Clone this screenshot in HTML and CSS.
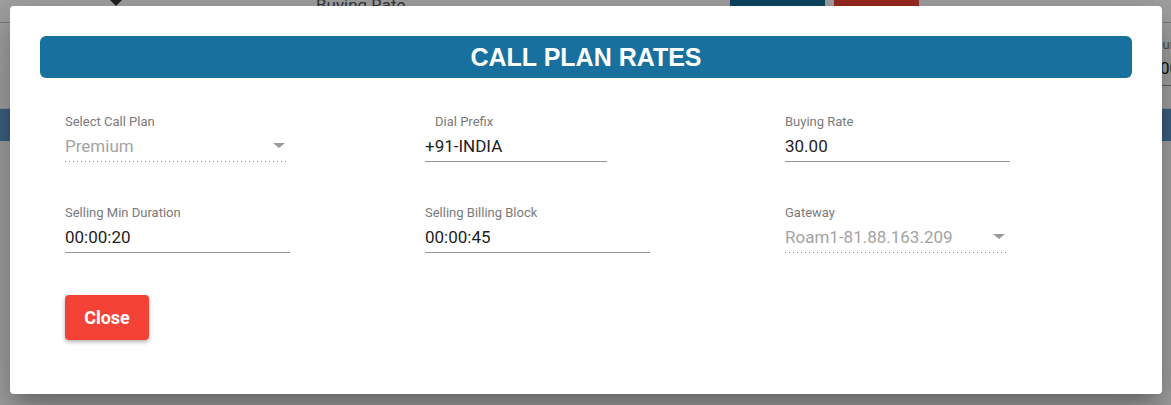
FILE: index.html
```html
<!DOCTYPE html>
<html lang="en">
<head>
<meta charset="utf-8">
<title>Call Plan Rates</title>
<link rel="stylesheet" href="styles.css">
</head>
<body>
<div class="page">
  <div class="toolbar">
    <span class="caret"></span>
    <span class="tb-label">Buying Rate</span>
    <span class="tb-btn search">Search</span>
    <span class="tb-btn reset">Reset</span>
  </div>
  <div class="side-field">
    <div class="side-label">Duration</div>
    <div class="side-value">00:00:20</div>
  </div>
  <div class="table-head"></div>
</div>
<div class="backdrop"></div>
<div class="dialog">
  <h1 class="dialog-title">CALL PLAN RATES</h1>
  <div class="form">
    <div class="field w222 disabled">
      <div class="label">Select Call Plan</div>
      <div class="value select"><span>Premium</span><span class="arrow"></span></div>
    </div>
    <div class="field w182">
      <div class="label indent">Dial Prefix</div>
      <div class="value">+91-INDIA</div>
    </div>
    <div class="field w225">
      <div class="label">Buying Rate</div>
      <div class="value">30.00</div>
    </div>
    <div class="field w225">
      <div class="label">Selling Min Duration</div>
      <div class="value">00:00:20</div>
    </div>
    <div class="field w225">
      <div class="label">Selling Billing Block</div>
      <div class="value">00:00:45</div>
    </div>
    <div class="field w222 disabled">
      <div class="label">Gateway</div>
      <div class="value select"><span>Roam1-81.88.163.209</span><span class="arrow"></span></div>
    </div>
  </div>
  <div class="actions">
    <button class="btn-close" type="button">Close</button>
  </div>
</div>
</body>
</html>
```
FILE: styles.css
```css
html, body {
  margin: 0;
  padding: 0;
}
body {
  width: 1171px;
  height: 405px;
  overflow: hidden;
  position: relative;
  background: #fff;
  font-family: Roboto, "Liberation Sans", sans-serif;
}

/* background page */
.page {
  width: 1171px;
}
.toolbar {
  height: 22px;
  border-bottom: 1px solid #c4c4c4;
  display: flex;
  align-items: flex-start;
  padding-left: 110px;
}
.caret {
  width: 0;
  height: 0;
  border-left: 6px solid transparent;
  border-right: 6px solid transparent;
  border-top: 6px solid #333;
}
.tb-label {
  margin-left: 194px;
  width: 414px;
  margin-top: -5px;
  font-size: 17px;
  line-height: 20px;
  color: #555;
}
.tb-btn {
  height: 36px;
  margin-top: -30px;
  display: flex;
  align-items: flex-end;
  justify-content: center;
  font-size: 17px;
  font-weight: bold;
  color: #fff;
  line-height: 20px;
  box-sizing: border-box;
  padding-bottom: 2px;
}
.tb-btn.search {
  width: 95px;
  background: #17709e;
}
.tb-btn.reset {
  width: 85px;
  margin-left: 9px;
  background: #f44336;
}
.side-field {
  margin-left: 1154px;
  padding-top: 14px;
  width: 120px;
  border-bottom: 1px solid #949494;
  padding-bottom: 7px;
}
.side-label {
  font-size: 13px;
  line-height: 15px;
  color: #757575;
  white-space: nowrap;
}
.side-value {
  margin-top: 6px;
  margin-left: 6px;
  font-size: 17px;
  line-height: 20px;
  color: #212121;
  white-space: nowrap;
}
.table-head {
  margin-top: 22px;
  height: 32px;
  border-top: 1px solid #e0ecf5;
  background: #5f98ce;
}

.backdrop {
  position: absolute;
  left: 0;
  top: 0;
  right: 0;
  bottom: 0;
  background: rgba(0, 0, 0, 0.37);
}

/* dialog */
.dialog {
  position: absolute;
  left: 10px;
  top: 6px;
  width: 1152px;
  height: 388px;
  box-sizing: border-box;
  padding: 30px;
  background: #fff;
  border-radius: 4px;
  box-shadow: 0 11px 15px -7px rgba(0,0,0,.2), 0 24px 38px 3px rgba(0,0,0,.14), 0 9px 46px 8px rgba(0,0,0,.12);
}
.dialog-title {
  margin: 0;
  height: 42px;
  border-radius: 6px;
  background: #17709e;
  color: #fff;
  font-family: "Liberation Sans", Arial, sans-serif;
  font-weight: bold;
  font-size: 25px;
  display: flex;
  align-items: center;
  justify-content: center;
}
.form {
  margin-top: 36px;
  padding-left: 25px;
  display: grid;
  grid-template-columns: 360px 360px 360px;
  row-gap: 43px;
}
.field {
  display: flex;
  flex-direction: column;
}
.w222 { width: 222px; }
.w182 { width: 182px; }
.w225 { width: 225px; }
.label {
  font-size: 13px;
  line-height: 15px;
  color: #7a7a7a;
}
.label.indent {
  padding-left: 10px;
}
.value {
  margin-top: 7px;
  font-size: 17px;
  line-height: 20px;
  color: #222;
  padding-bottom: 5px;
  border-bottom: 1px solid #949494;
  white-space: nowrap;
}
.field.disabled .value {
  color: #a3a3a3;
  border-bottom: none;
  padding-bottom: 6px;
  background-image: linear-gradient(to right, rgba(0,0,0,.42) 0%, rgba(0,0,0,.42) 33%, transparent 0%);
  background-size: 4px 1px;
  background-repeat: repeat-x;
  background-position: 0 bottom;
}
.value.select {
  display: flex;
  justify-content: space-between;
  align-items: flex-start;
}
.arrow {
  width: 0;
  height: 0;
  border-left: 6px solid transparent;
  border-right: 6px solid transparent;
  border-top: 5px solid #9a9a9a;
  margin-top: 7px;
  margin-right: 2px;
}
.actions {
  margin-top: 42px;
  padding-left: 25px;
  display: flex;
}
.btn-close {
  width: 84px;
  height: 45px;
  padding: 0;
  border: none;
  border-radius: 4px;
  background: #f44336;
  color: #fff;
  font-family: Roboto, "Liberation Sans", sans-serif;
  font-weight: bold;
  font-size: 18px;
  line-height: 45px;
  box-shadow: 0 2px 4px rgba(0,0,0,.3);
  cursor: pointer;
}
```
